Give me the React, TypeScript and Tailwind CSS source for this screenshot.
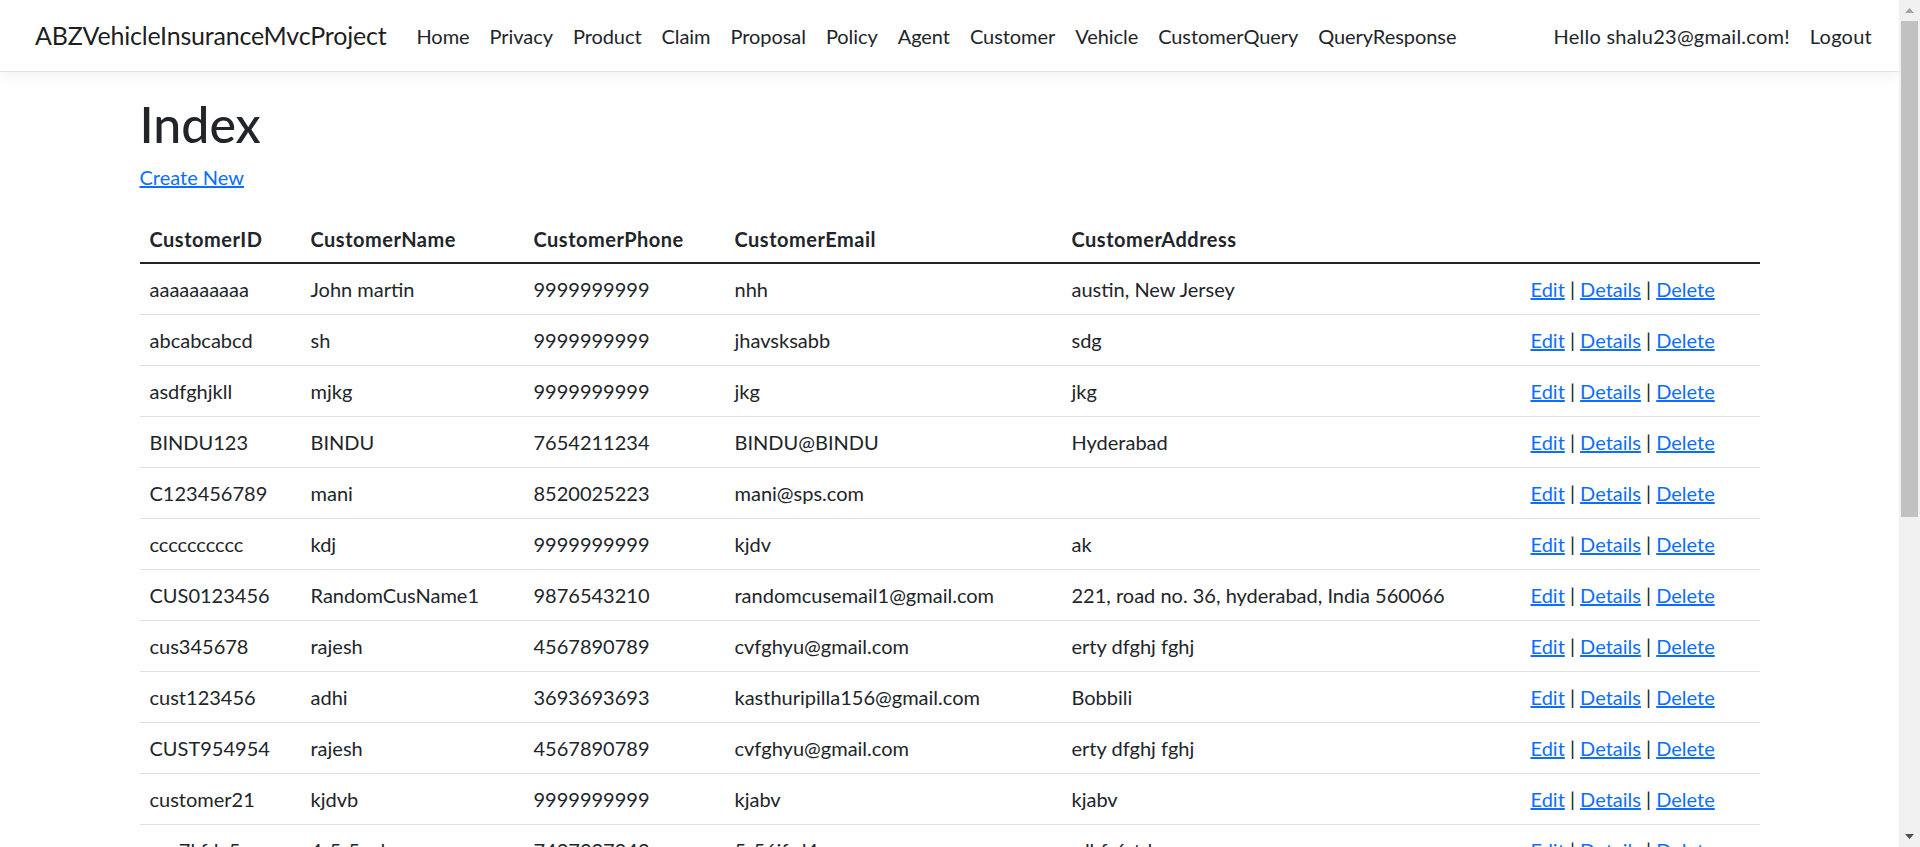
import React from "react";

type Row = { id: string; name: string; phone: string; email: string; address: string };

const rows: Row[] = [
  { id: "aaaaaaaaaa", name: "John martin", phone: "9999999999", email: "nhh", address: "austin, New Jersey" },
  { id: "abcabcabcd", name: "sh", phone: "9999999999", email: "jhavsksabb", address: "sdg" },
  { id: "asdfghjkll", name: "mjkg", phone: "9999999999", email: "jkg", address: "jkg" },
  { id: "BINDU123", name: "BINDU", phone: "7654211234", email: "BINDU@BINDU", address: "Hyderabad" },
  { id: "C123456789", name: "mani", phone: "8520025223", email: "mani@sps.com", address: "" },
  { id: "cccccccccc", name: "kdj", phone: "9999999999", email: "kjdv", address: "ak" },
  { id: "CUS0123456", name: "RandomCusName1", phone: "9876543210", email: "randomcusemail1@gmail.com", address: "221, road no. 36, hyderabad, India 560066" },
  { id: "cus345678", name: "rajesh", phone: "4567890789", email: "cvfghyu@gmail.com", address: "erty dfghj fghj" },
  { id: "cust123456", name: "adhi", phone: "3693693693", email: "kasthuripilla156@gmail.com", address: "Bobbili" },
  { id: "CUST954954", name: "rajesh", phone: "4567890789", email: "cvfghyu@gmail.com", address: "erty dfghj fghj" },
  { id: "customer21", name: "kjdvb", phone: "9999999999", email: "kjabv", address: "kjabv" },
  { id: "cus7kfdv5", name: "4r5r5rrd", phone: "7427327942", email: "5r56ifrd4", address: "rdhfr6rtdr" },
  { id: "cust56789", name: "ravi", phone: "9876598765", email: "ravi@gmail.com", address: "Chennai" },
  { id: "cust99999", name: "sita", phone: "9123456780", email: "sita@gmail.com", address: "Pune" },
];

const navItems = [
  "Home",
  "Privacy",
  "Product",
  "Claim",
  "Proposal",
  "Policy",
  "Agent",
  "Customer",
  "Vehicle",
  "CustomerQuery",
  "QueryResponse",
];

function Scrollbar() {
  return (
    <div className="w-[21px] h-full bg-[#f1f1f1] flex flex-col shrink-0">
      <div className="h-[21px] flex items-center justify-center">
        <svg width="9" height="5" viewBox="0 0 9 5">
          <polygon points="0,5 9,5 4.5,0" fill="#a3a3a3" />
        </svg>
      </div>
      <div className="h-[496px] mx-[2px] bg-[#c1c1c1]" />
      <div className="flex-1" />
      <div className="h-[21px] flex items-center justify-center">
        <svg width="9" height="5" viewBox="0 0 9 5">
          <polygon points="0,0 9,0 4.5,5" fill="#505050" />
        </svg>
      </div>
    </div>
  );
}

export default function App() {
  return (
    <div className="h-[847px] w-full flex overflow-hidden bg-white font-['Lato','Noto_Sans',sans-serif] text-[#212529]">
      <div className="flex-1 min-w-0 overflow-hidden">
        <nav className="h-[72px] bg-white border-b border-[#dee2e6] shadow-[0_5px_15px_rgba(0,0,0,0.05)] flex items-center pl-[35px] pr-[17px] relative z-10">
          <a className="text-[25px] leading-[37px] text-[rgba(0,0,0,0.9)] mr-[20px] whitespace-nowrap tracking-[-0.008em]">
            ABZVehicleInsuranceMvcProject
          </a>
          <ul className="flex flex-1 items-center tracking-[-0.004em]">
            {navItems.map((n) => (
              <li key={n}>
                <a className="block px-[10px] text-[20px] leading-[30px] text-[#212529] whitespace-nowrap">{n}</a>
              </li>
            ))}
          </ul>
          <ul className="flex items-center tracking-[0.015em]">
            <li>
              <a className="block px-[10px] text-[20px] leading-[30px] text-[#212529] whitespace-nowrap">Hello shalu23@gmail.com!</a>
            </li>
            <li>
              <a className="block px-[10px] text-[20px] leading-[30px] text-[#212529] whitespace-nowrap">Logout</a>
            </li>
          </ul>
        </nav>

        <div className="w-[1650px] mx-auto px-[15px] pt-[22px]">
          <h1 className="text-[50px] leading-[60px] font-medium mb-[8px]">Index</h1>
          <p className="text-[20px] leading-[30px] mb-[20px]">
            <a className="text-[#0d6efd] underline">Create New</a>
          </p>
          <table className="w-full table-fixed border-collapse text-[20px] leading-[30px]">
            <thead>
              <tr className="border-b-2 border-[#212529]">
                <th className="w-[161px] px-[10px] pt-[12px] pb-[8px] text-left font-bold tracking-[0.025em]">CustomerID</th>
                <th className="w-[223px] px-[10px] pt-[12px] pb-[8px] text-left font-bold tracking-[0.025em]">CustomerName</th>
                <th className="w-[201px] px-[10px] pt-[12px] pb-[8px] text-left font-bold tracking-[0.025em]">CustomerPhone</th>
                <th className="w-[337px] px-[10px] pt-[12px] pb-[8px] text-left font-bold tracking-[0.025em]">CustomerEmail</th>
                <th className="w-[459px] px-[10px] pt-[12px] pb-[8px] text-left font-bold tracking-[0.025em]">CustomerAddress</th>
                <th className="px-[10px] pt-[12px] pb-[8px]"></th>
              </tr>
            </thead>
            <tbody>
              {rows.map((r) => (
                <tr key={r.id} className="border-b border-[#dee2e6]">
                  <td className="px-[10px] py-[10px] whitespace-nowrap">{r.id}</td>
                  <td className="px-[10px] py-[10px] whitespace-nowrap">{r.name}</td>
                  <td className="px-[10px] py-[10px] whitespace-nowrap">{r.phone}</td>
                  <td className="px-[10px] py-[10px] whitespace-nowrap">{r.email}</td>
                  <td className="px-[10px] py-[10px] whitespace-nowrap">{r.address}</td>
                  <td className="px-[10px] py-[10px] whitespace-nowrap">
                    <a className="text-[#0d6efd] underline">Edit</a> |{" "}
                    <a className="text-[#0d6efd] underline">Details</a> |{" "}
                    <a className="text-[#0d6efd] underline">Delete</a>
                  </td>
                </tr>
              ))}
            </tbody>
          </table>
        </div>
      </div>
      <Scrollbar />
    </div>
  );
}
